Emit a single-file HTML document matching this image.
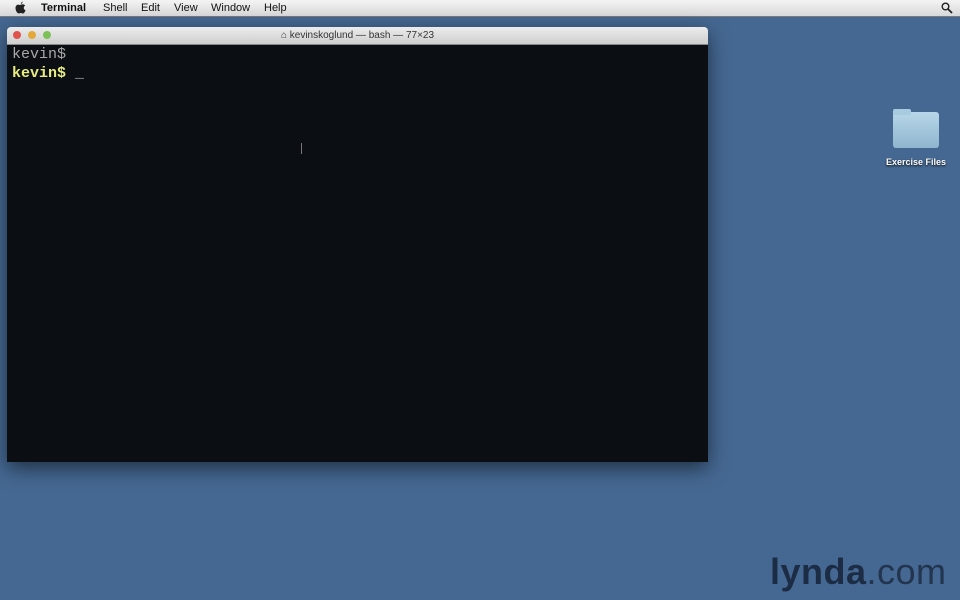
<!DOCTYPE html>
<html><head><style>
body{margin:0;width:960px;height:600px;overflow:hidden;background:#456892;font-family:"Liberation Sans",sans-serif;position:relative}
.menu{position:absolute;left:0;top:0;width:960px;height:16px;background:linear-gradient(#f4f4f4,#d8d8d8);border-bottom:1px solid #7a7a7a;font-size:11px;color:#111}
.menu span{position:absolute;top:2px}
.win{position:absolute;left:7px;top:27px;width:701px;height:435px;box-shadow:0 6px 20px rgba(0,0,0,.55);border-radius:4px 4px 0 0;overflow:hidden}
.tb{height:17px;background:linear-gradient(#ececec,#cfcfcf);border-bottom:1px solid #888;font-size:10px;color:#333;text-align:center;line-height:17px;position:relative}
.dot{position:absolute;top:4px;width:8px;height:8px;border-radius:50%}
.term{background:#0b0e12;height:417px;font-family:"Liberation Mono",monospace;font-size:15px;line-height:19px;padding:0 5px;font-weight:bold}
</style></head><body>
<div class="menu">
<svg style="position:absolute;left:14px;top:1px" width="13" height="14" viewBox="0 0 13 14"><path d="M8.6 0.5c0.1 1-0.6 2.2-1.7 2.6-0.1-1 0.6-2.1 1.7-2.6zM6.4 3.8c0.7 0 1.4-0.5 2.3-0.5 1 0 1.9 0.5 2.4 1.3-2 1.1-1.6 3.9 0.4 4.6-0.4 1.3-1.4 3.3-2.6 3.3-0.9 0-1.1-0.5-2.1-0.5s-1.3 0.5-2.1 0.5C3.4 12.5 1.5 9.8 1.5 7c0-2.2 1.4-3.4 2.8-3.4 0.9 0 1.5 0.5 2.1 0.5z" fill="#222"/></svg>
<span style="left:41px;font-weight:bold">Terminal</span>
<span style="left:103px">Shell</span>
<span style="left:141px">Edit</span>
<span style="left:174px">View</span>
<span style="left:211px">Window</span>
<span style="left:264px">Help</span>
<svg style="position:absolute;left:941px;top:2px" width="12" height="12" viewBox="0 0 12 12"><circle cx="4.5" cy="4.5" r="3.3" fill="none" stroke="#222" stroke-width="1.4"/><path d="M7 7l4 4" stroke="#222" stroke-width="1.8"/></svg>
</div>
<div class="win">
<div class="tb">
<div class="dot" style="left:6px;background:#e0524c"></div>
<div class="dot" style="left:21px;background:#e5a83a"></div>
<div class="dot" style="left:36px;background:#7cc157"></div>
⌂ kevinskoglund — bash — 77×23
</div>
<div class="term"><div style="color:#a8a8a8;font-weight:normal">kevin$</div><div style="color:#e8ec80">kevin$ <span style="color:#aaa">_</span></div></div>
</div>
<div style="position:absolute;left:301px;top:143px;width:1px;height:11px;background:#777"></div>
<div style="position:absolute;left:893px;top:112px;width:46px;height:36px;background:linear-gradient(#b8d6e8,#8fb6cf);border-radius:3px"></div>
<div style="position:absolute;left:893px;top:109px;width:18px;height:6px;background:#a9cbe0;border-radius:2px 2px 0 0"></div>
<div style="position:absolute;left:870px;top:157px;width:92px;text-align:center;color:#fff;font-size:9px;font-weight:bold;text-shadow:0 1px 2px #000">Exercise Files</div>
<div style="position:absolute;left:770px;top:551px;font-size:36px;color:#1c2c44;letter-spacing:0.5px"><b>lynda</b><span style="font-weight:normal;color:#22344e">.com</span></div>
</body></html>
